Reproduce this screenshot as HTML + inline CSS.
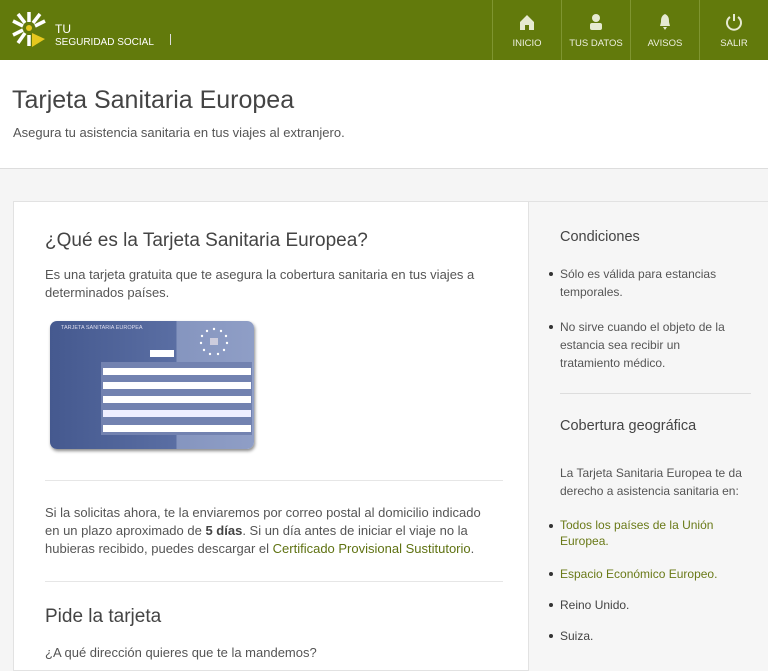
<!DOCTYPE html>
<html><head><meta charset="utf-8"><style>
*{margin:0;padding:0;box-sizing:border-box}
body{width:768px;height:666px;overflow:hidden;background:#f5f5f5;font-family:"Liberation Sans",sans-serif;color:#444;position:relative}
.a{position:absolute;white-space:nowrap}
.hdr{position:absolute;left:0;top:0;width:768px;height:60px;background:#627a0c}
.nav{position:absolute;top:0;height:60px;border-left:1px solid #7f9530;color:#eef0e0;font-size:9.5px;text-align:center}
.nav span{position:absolute;left:0;right:0;top:38px}
.nav svg{position:absolute;top:13px;left:50%;margin-left:-9px}
.p{font-size:13px;line-height:18px;color:#555}
.g{color:#5f7212}
.dot{position:absolute;width:4px;height:4px;border-radius:2px;background:#333}
</style></head><body>
<div class="hdr">
<svg class="a" style="left:12px;top:10px" width="36" height="38" viewBox="0 0 36 38">
<g stroke="#fff" stroke-width="3.5" stroke-linecap="butt" fill="none">
<line x1="17" y1="2" x2="17" y2="12"/>
<line x1="6" y1="4" x2="13" y2="13"/>
<line x1="28" y1="4" x2="21" y2="13"/>
<line x1="1" y1="11" x2="11" y2="16"/>
<line x1="1" y1="25" x2="11" y2="20"/>
<line x1="6" y1="33" x2="13" y2="23"/>
<line x1="17" y1="25" x2="17" y2="36"/>
<line x1="33" y1="11" x2="23" y2="16"/>
</g>
<circle cx="17" cy="18" r="3" fill="#e6c81e"/>
<path d="M20 23 L33 29 L20 37 Z" fill="#e6c81e"/>
</svg>
<div class="a" style="left:55px;top:22px;color:#fff;font-size:12px">TU</div>
<div class="a" style="left:55px;top:37px;color:#fff;font-size:10px">SEGURIDAD SOCIAL</div>
<div class="a" style="left:170px;top:34px;width:1px;height:11px;background:#ddd"></div>
<div class="nav" style="left:492px;width:69px"><svg width="18" height="18" viewBox="0 0 18 18"><path d="M2 9 L9 2 L16 9 L16 17 L11 17 L11 12 L7 12 L7 17 L2 17Z" fill="#e6ead2"/></svg><span>INICIO</span></div>
<div class="nav" style="left:561px;width:69px"><svg width="18" height="18" viewBox="0 0 18 18"><circle cx="9" cy="5" r="4" fill="#e6ead2"/><rect x="3" y="10" width="12" height="7" rx="2" fill="#e6ead2"/></svg><span>TUS DATOS</span></div>
<div class="nav" style="left:630px;width:69px"><svg width="18" height="18" viewBox="0 0 18 18"><path d="M9 1 C5 3 5 6 5 9 L4 13 L14 13 L13 9 C13 6 13 3 9 1Z M7 14 L11 14 L9 17Z" fill="#e6ead2"/></svg><span>AVISOS</span></div>
<div class="nav" style="left:699px;width:69px"><svg width="18" height="18" viewBox="0 0 18 18"><path d="M5 4 A7 7 0 1 0 13 4" fill="none" stroke="#e6ead2" stroke-width="2"/><line x1="9" y1="1" x2="9" y2="8" stroke="#e6ead2" stroke-width="2"/></svg><span>SALIR</span></div>
</div>
<div class="a" style="left:0;top:60px;width:768px;height:109px;background:#fff;border-bottom:1px solid #ddd"></div>
<div class="a" style="left:12px;top:86px;font-size:25px;color:#444">Tarjeta Sanitaria Europea</div>
<div class="a" style="left:13px;top:125px;font-size:13px;color:#555">Asegura tu asistencia sanitaria en tus viajes al extranjero.</div>

<div class="a" style="left:13px;top:201px;width:516px;height:470px;background:#fff;border:1px solid #e2e2e2"></div>
<div class="a" style="left:528px;top:201px;width:240px;height:470px;background:#f6f6f6;border-left:1px solid #e2e2e2;border-top:1px solid #e2e2e2"></div>

<div class="a" style="left:45px;top:230px;font-size:19px;color:#444">¿Qué es la Tarjeta Sanitaria Europea?</div>
<div class="a p" style="left:45px;top:266px">Es una tarjeta gratuita que te asegura la cobertura sanitaria en tus viajes a<br>determinados países.</div>

<div class="a" style="left:50px;top:321px;width:204px;height:128px;border-radius:7px;background:linear-gradient(90deg,#45598f 0%,#5a6ea3 62%,#8595bf 62%,#8f9ec6 100%);box-shadow:1px 2px 3px #888"></div>
<div class="a" style="left:61px;top:325px;font-size:5.5px;color:#dde">TARJETA SANITARIA EUROPEA</div>
<div class="a" style="left:150px;top:350px;width:24px;height:7px;background:#fff"></div>
<svg class="a" style="left:196px;top:326px" width="36" height="32"><g fill="#fff"><circle cx="18" cy="3" r="1.2"/><circle cx="25" cy="5" r="1.2"/><circle cx="30" cy="10" r="1.2"/><circle cx="31" cy="17" r="1.2"/><circle cx="28" cy="24" r="1.2"/><circle cx="22" cy="28" r="1.2"/><circle cx="14" cy="28" r="1.2"/><circle cx="8" cy="24" r="1.2"/><circle cx="5" cy="17" r="1.2"/><circle cx="6" cy="10" r="1.2"/><circle cx="11" cy="5" r="1.2"/></g><rect x="14" y="12" width="8" height="7" fill="#ccd"/></svg>
<div class="a" style="left:101px;top:362px;width:151px;height:73px;background:#7282b0"></div>
<div class="a" style="left:103px;top:368px;width:148px;height:7px;background:#fff"></div>
<div class="a" style="left:103px;top:382px;width:148px;height:7px;background:#fff"></div>
<div class="a" style="left:103px;top:396px;width:148px;height:7px;background:#fff"></div>
<div class="a" style="left:103px;top:410px;width:148px;height:7px;background:#eef"></div>
<div class="a" style="left:103px;top:425px;width:148px;height:7px;background:#fff"></div>

<div class="a" style="left:45px;top:480px;width:458px;height:1px;background:#e6e6e6"></div>
<div class="a p" style="left:45px;top:504px">Si la solicitas ahora, te la enviaremos por correo postal al domicilio indicado<br>en un plazo aproximado de <b style="color:#444">5 días</b>. Si un día antes de iniciar el viaje no la<br>hubieras recibido, puedes descargar el <span class="g">Certificado Provisional Sustitutorio</span>.</div>
<div class="a" style="left:45px;top:581px;width:458px;height:1px;background:#e6e6e6"></div>
<div class="a" style="left:45px;top:606px;font-size:19px;color:#444">Pide la tarjeta</div>
<div class="a p" style="left:45px;top:644px">¿A qué dirección quieres que te la mandemos?</div>

<div class="a" style="left:560px;top:229px;font-size:14.5px;color:#444">Condiciones</div>
<div class="dot" style="left:549px;top:272px"></div>
<div class="a p" style="left:560px;top:265px;font-size:12px">Sólo es válida para estancias<br>temporales.</div>
<div class="dot" style="left:549px;top:325px"></div>
<div class="a p" style="left:560px;top:318px;font-size:12px">No sirve cuando el objeto de la<br>estancia sea recibir un<br>tratamiento médico.</div>
<div class="a" style="left:560px;top:393px;width:191px;height:1px;background:#ddd"></div>
<div class="a" style="left:560px;top:418px;font-size:14.5px;color:#444">Cobertura geográfica</div>
<div class="a p" style="left:560px;top:464px;font-size:12px">La Tarjeta Sanitaria Europea te da<br>derecho a asistencia sanitaria en:</div>
<div class="dot" style="left:549px;top:524px"></div>
<div class="a p g" style="left:560px;top:517px;font-size:12px;line-height:16px;color:#6a7a18">Todos los países de la Unión<br>Europea.</div>
<div class="dot" style="left:549px;top:572px"></div>
<div class="a p" style="left:560px;top:565px;font-size:12px;color:#6a7a18">Espacio Económico Europeo.</div>
<div class="dot" style="left:549px;top:603px"></div>
<div class="a p" style="left:560px;top:596px;font-size:12px;color:#444">Reino Unido.</div>
<div class="dot" style="left:549px;top:634px"></div>
<div class="a p" style="left:560px;top:627px;font-size:12px;color:#444">Suiza.</div>
</body></html>
